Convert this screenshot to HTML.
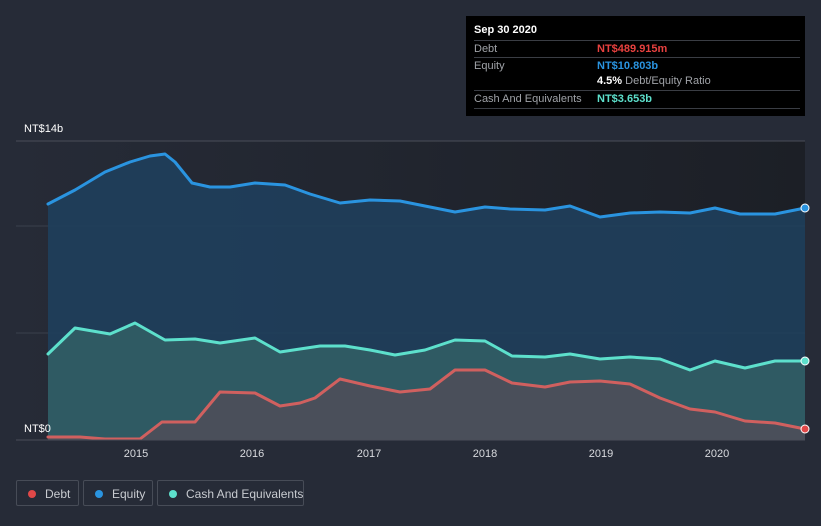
<!DOCTYPE html>
<html><head><meta charset="utf-8"><style>
body{margin:0;background:#262b37;font-family:"Liberation Sans",sans-serif;}
.wrap{position:relative;width:821px;height:526px;overflow:hidden;background:#262b37}
.tt{position:absolute;left:466px;top:16px;width:339px;height:100px;background:#000;color:#fff;font-size:11px}
.tt .r{position:absolute;left:8px;right:5px;border-top:1px solid #3a3d44;height:17px;line-height:17px}
.tt .l{color:#a0a3a8;position:absolute;left:0}
.tt .v{position:absolute;left:123px;font-weight:bold}
.leg{position:absolute;top:480px;height:26px;border:1px solid #474c57;border-radius:2px;color:#c8cbd0;font-size:12px;line-height:26px;box-sizing:border-box;white-space:nowrap}
.leg i{position:absolute;left:11px;top:9px;width:8px;height:8px;border-radius:50%}
</style></head><body><div class="wrap">
<svg width="821" height="526" style="position:absolute;left:0;top:0">
<defs><linearGradient id="bg" x1="0" x2="1"><stop offset="0" stop-color="#262b37"/><stop offset="1" stop-color="#1c1f26"/></linearGradient></defs>
<rect x="16" y="141" width="789" height="299" fill="url(#bg)"/>
<line x1="16" y1="141" x2="805" y2="141" stroke="#4a4e58"/>
<line x1="16" y1="226" x2="805" y2="226" stroke="#3a404c"/>
<line x1="16" y1="333" x2="805" y2="333" stroke="#3a404c"/>
<polygon fill="#1f3f5c" fill-opacity="0.9" points="48,440 48,204 75,190 105,172 130,162 150,156 165,154 175,162 192,183 210,187 230,187 255,183 285,185 310,194 340,203 370,200 400,201 430,207 455,212 485,207 510,209 545,210 570,206 600,217 630,213 660,212 690,213 715,208 740,214 775,214 805,208 805,440"/>
<polygon fill="#2f5a63" points="48,440 48,354 75,328 110,334 135,323 165,340 195,339 220,343 255,338 280,352 320,346 345,346 370,350 395,355 425,350 455,340 485,341 512,356 545,357 570,354 600,359 630,357 660,359 690,370 715,361 745,368 775,361 805,361 805,440"/>
<polygon fill="#4a4f5a" points="48,440 48,437 80,437 105,439 140,439 162,422 195,422 220,392 255,393 280,406 300,403 315,398 340,379 370,386 400,392 430,389 455,370 485,370 512,383 545,387 570,382 600,381 630,384 660,398 690,409 715,412 745,421 775,423 805,429 805,440"/>
<g fill="none" stroke-width="3" stroke-linejoin="round" stroke-linecap="round">
<polyline stroke="#2a94e0" points="48,204 75,190 105,172 130,162 150,156 165,154 175,162 192,183 210,187 230,187 255,183 285,185 310,194 340,203 370,200 400,201 430,207 455,212 485,207 510,209 545,210 570,206 600,217 630,213 660,212 690,213 715,208 740,214 775,214 805,208"/>
<polyline stroke="#5de0cc" points="48,354 75,328 110,334 135,323 165,340 195,339 220,343 255,338 280,352 320,346 345,346 370,350 395,355 425,350 455,340 485,341 512,356 545,357 570,354 600,359 630,357 660,359 690,370 715,361 745,368 775,361 805,361"/>
<polyline stroke="#d0605f" points="48,437 80,437 105,439 140,439 162,422 195,422 220,392 255,393 280,406 300,403 315,398 340,379 370,386 400,392 430,389 455,370 485,370 512,383 545,387 570,382 600,381 630,384 660,398 690,409 715,412 745,421 775,423 805,429"/>
</g>
<line x1="16" y1="440" x2="805" y2="440" stroke="#4a4e58"/>
<circle cx="805" cy="208" r="4" fill="#2a94e0" stroke="#fff" stroke-width="1"/>
<circle cx="805" cy="361" r="4" fill="#5de0cc" stroke="#fff" stroke-width="1"/>
<circle cx="805" cy="429" r="4" fill="#e04848" stroke="#fff" stroke-width="1"/>
<g fill="#fff" font-size="11" font-family="Liberation Sans,sans-serif">
<text x="24" y="132">NT$14b</text><text x="24" y="432">NT$0</text>
</g>
<g fill="#d8dade" font-size="11" text-anchor="middle" font-family="Liberation Sans,sans-serif">
<text x="136" y="457">2015</text><text x="252" y="457">2016</text><text x="369" y="457">2017</text><text x="485" y="457">2018</text><text x="601" y="457">2019</text><text x="717" y="457">2020</text>
</g>
</svg>
<div class="tt">
<div style="position:absolute;left:8px;top:8px;font-weight:bold">Sep 30 2020</div>
<div class="r" style="top:24px"><span class="l">Debt</span><span class="v" style="color:#e8413f">NT$489.915m</span></div>
<div class="r" style="top:41px"><span class="l">Equity</span><span class="v" style="color:#2a94e0">NT$10.803b</span></div>
<div class="r" style="top:57px;border:none"><span class="v">4.5% <span style="color:#a0a3a8;font-weight:normal">Debt/Equity Ratio</span></span></div>
<div class="r" style="top:74px"><span class="l">Cash And Equivalents</span><span class="v" style="color:#5de0cc">NT$3.653b</span></div>
<div class="r" style="top:92px;height:0"></div>
</div>
<div class="leg" style="left:16px;width:63px"><i style="background:#e04848"></i><span style="position:absolute;left:28px">Debt</span></div>
<div class="leg" style="left:83px;width:70px"><i style="background:#2a94e0"></i><span style="position:absolute;left:28px">Equity</span></div>
<div class="leg" style="left:157px;width:147px"><i style="background:#5de0cc"></i><span style="position:absolute;left:28px">Cash And Equivalents</span></div>
</div></body></html>
